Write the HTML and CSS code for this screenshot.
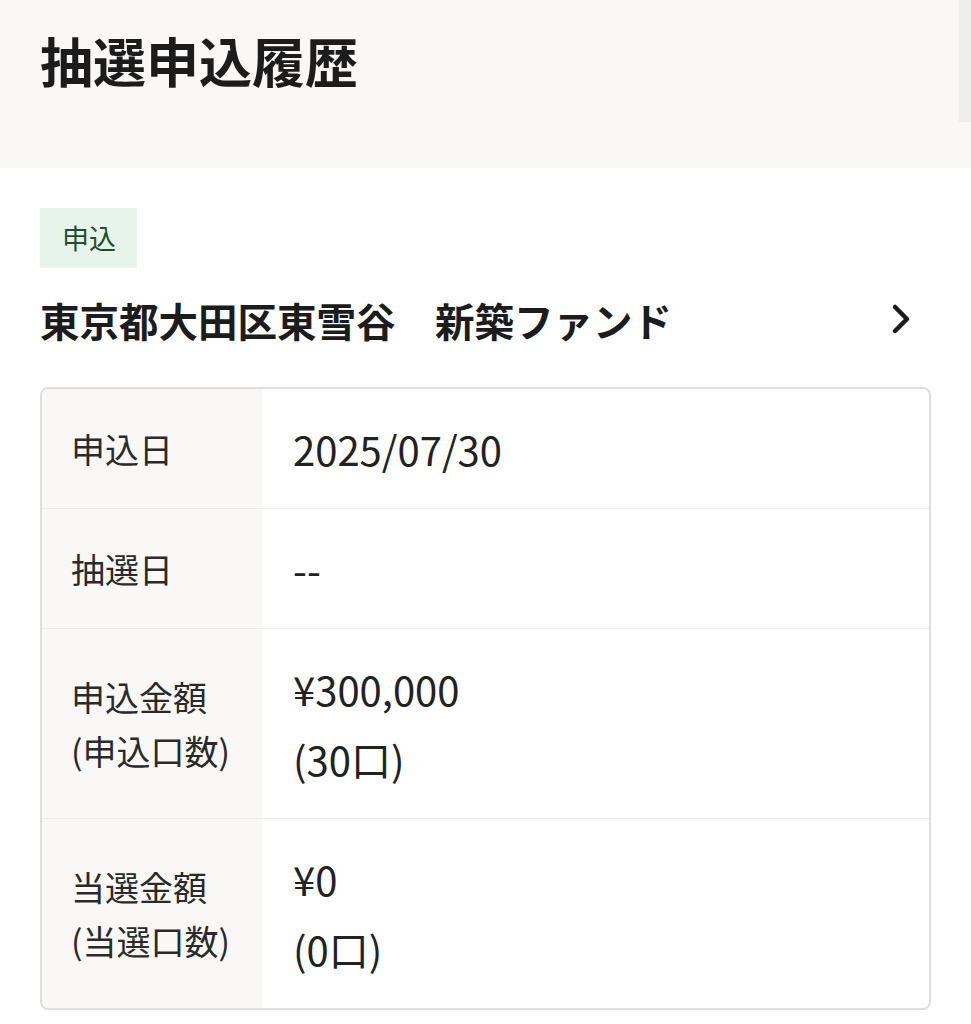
FILE: index.html
```html
<!DOCTYPE html>
<html lang="ja">
  <head>
    <meta charset="UTF-8" />
    <title>抽選申込履歴</title>
    <link rel="stylesheet" href="styles.css">
  </head>

  <body>
    <header>
      <h1>抽選申込履歴</h1>
      <div class="scroll"></div>
    </header>

    <main>
      <span class="badge">申込</span>
      <a class="fund" href="#">
        <h2>東京都大田区東雪谷　新築ファンド</h2>
        <svg class="chevron" width="24" height="34" viewBox="0 0 24 34">
          <path d="M5 4 L17 16 L5 28" fill="none" stroke="#1c1c1c" stroke-width="4.5" stroke-linecap="round" stroke-linejoin="round" />
        </svg>
      </a>

      <section class="detail">
        <div class="row">
          <div class="label">申込日</div>
          <div class="value"><span>2025/07/30</span></div>
        </div>
        <div class="row">
          <div class="label">抽選日</div>
          <div class="value"><span>--</span></div>
        </div>
        <div class="row">
          <div class="label">申込金額<br>(申込口数)</div>
          <div class="value"><span>¥300,000</span><span>(30口)</span></div>
        </div>
        <div class="row">
          <div class="label">当選金額<br>(当選口数)</div>
          <div class="value"><span>¥0</span><span>(0口)</span></div>
        </div>
      </section>
    </main>
  </body>
</html>
```

FILE: styles.css
```css
* {
  box-sizing: border-box;
}

body {
  margin: 0;
  font-family: "Noto Sans CJK JP", "Noto Sans", sans-serif;
  color: #222;
  background-color: #fff;
}

header {
  position: relative;
  height: 168px;
  padding: 22px 40px 0;
  background-color: #f9f8f6;
}

h1 {
  margin: 0;
  font-size: 53px;
  line-height: 76px;
  font-weight: 700;
  color: #1c1c1c;
}

.scroll {
  position: absolute;
  top: 0;
  right: 0;
  width: 12px;
  height: 122px;
  background-color: #ededec;
}

main {
  padding: 40px 40px 0;
}

.badge {
  display: inline-block;
  height: 60px;
  padding: 0 21px 0 22px;
  line-height: 60px;
  font-size: 27px;
  color: #1f4d34;
  background-color: #e6f4ec;
}

.fund {
  display: flex;
  align-items: center;
  justify-content: space-between;
  margin-top: 22px;
  padding-right: 17px;
  color: #1c1c1c;
  text-decoration: none;
}

h2 {
  margin: 0;
  font-size: 39.5px;
  line-height: 60px;
  font-weight: 700;
}

.detail {
  margin-top: 37px;
  border: 2px solid #dedede;
  border-radius: 8px;
  overflow: hidden;
}

.row {
  display: flex;
  border-top: 1px solid #ececec;
}

.row:first-child {
  border-top: none;
}

.label {
  width: 220px;
  flex-shrink: 0;
  display: flex;
  align-items: center;
  padding: 0 0 0 29px;
  font-size: 34px;
  line-height: 54px;
  color: #2a2a2a;
  background-color: #f9f8f6;
}

.value {
  display: flex;
  flex-direction: column;
  justify-content: center;
  gap: 2px;
  padding: 26px 31px 25px;
  font-size: 40px;
  line-height: 68px;
  color: #222;
}
```
